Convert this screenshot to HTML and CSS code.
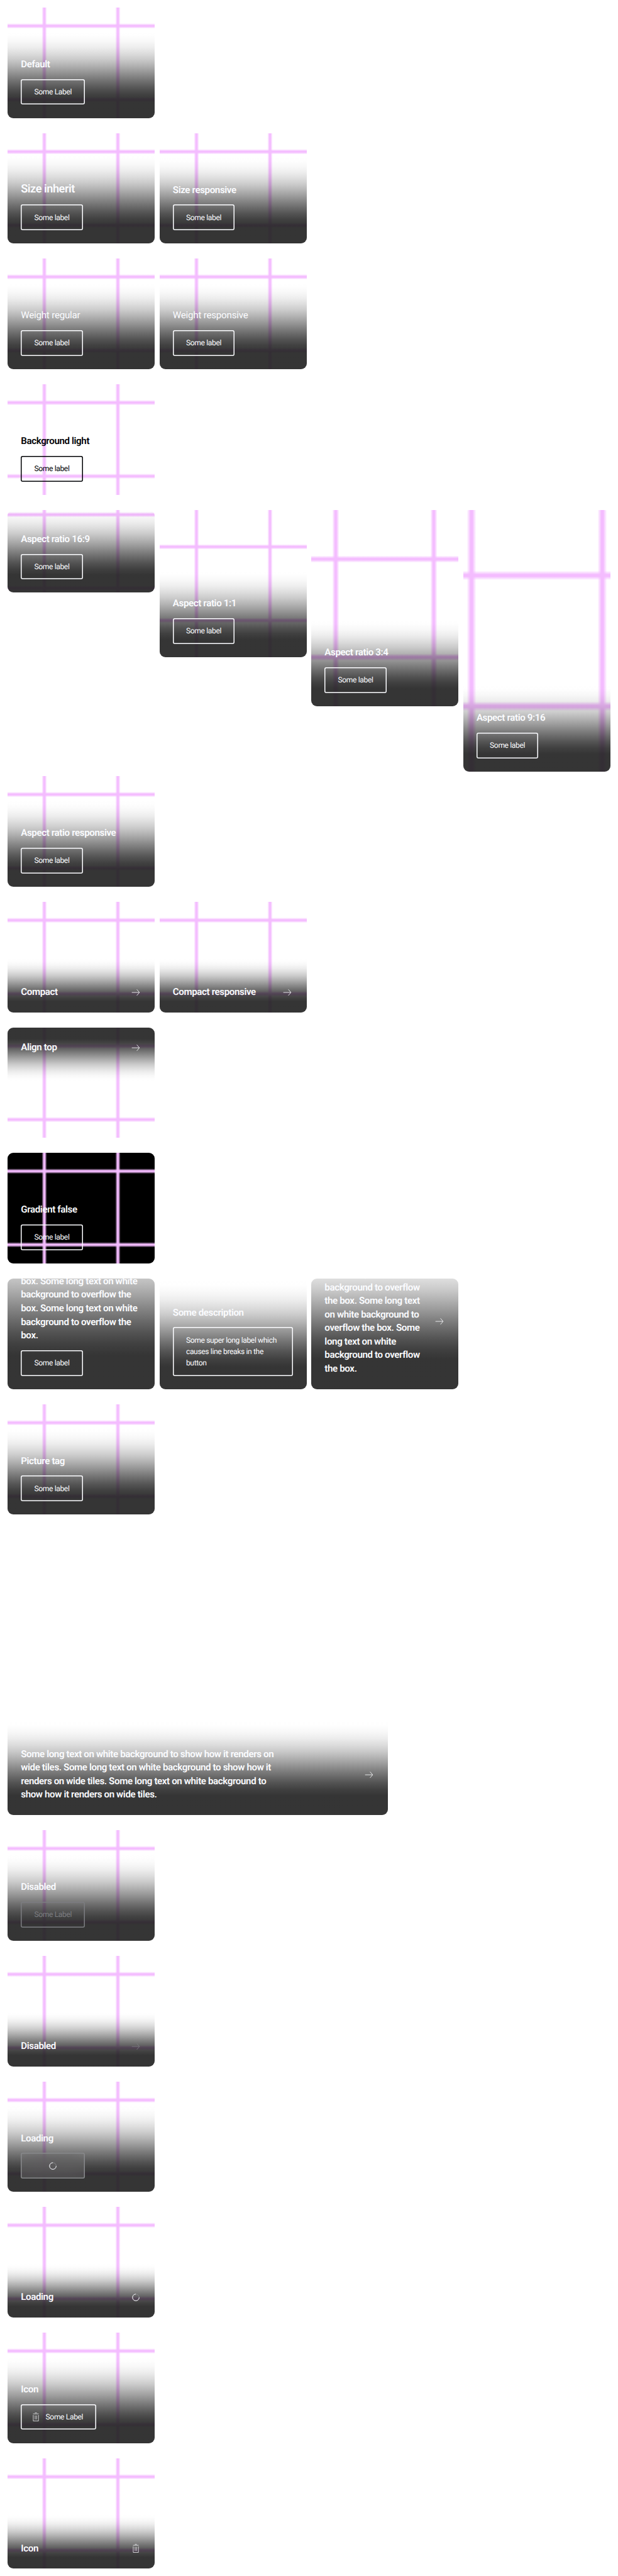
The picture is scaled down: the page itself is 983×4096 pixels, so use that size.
FILE: index.html
```html
<!DOCTYPE html>
<html lang="en">
<head>
<meta charset="utf-8">
<title>Link tile</title>
<link rel="stylesheet" href="styles.css">
</head>
<body>
<svg class="sprite" aria-hidden="true">
  <defs>
    <linearGradient id="lx" x1="0" x2="1" y1="0" y2="0">
      <stop offset="0" stop-color="#f4bcff" stop-opacity="0"/><stop offset=".4" stop-color="#f4bcff"/><stop offset=".6" stop-color="#f4bcff"/><stop offset="1" stop-color="#f4bcff" stop-opacity="0"/>
    </linearGradient>
    <linearGradient id="ly" x1="0" x2="0" y1="0" y2="1">
      <stop offset="0" stop-color="#f4bcff" stop-opacity="0"/><stop offset=".4" stop-color="#f4bcff"/><stop offset=".6" stop-color="#f4bcff"/><stop offset="1" stop-color="#f4bcff" stop-opacity="0"/>
    </linearGradient>
    <g id="grid">
      <rect x="23.2" y="0" width="3.6" height="100" fill="url(#lx)"/>
      <rect x="73.2" y="0" width="3.6" height="100" fill="url(#lx)"/>
      <rect x="0" y="23.2" width="100" height="3.6" fill="url(#ly)"/>
      <rect x="0" y="73.2" width="100" height="3.6" fill="url(#ly)"/>
    </g>
    <g id="arrow" fill="none" stroke="currentColor" stroke-width="1.1"><path d="M3.5 12H19.4M14 5.6L19.6 12L14 18.4"/></g>
    <g id="trash" fill="none" stroke="currentColor" stroke-width="1"><path d="M10 3.5h4M6 5.5h12M6.5 8v12.5h11V8M10.5 9v8.5M13.5 9v8.5"/></g>
    <g id="spinner" fill="none" stroke-width="1.2"><circle cx="12" cy="12" r="7" stroke="#88898c"/><path d="M19 12A7 7 0 1 1 12 5" stroke="#fbfcff"/></g>
  </defs>
</svg>
<main class="page">
  <section class="row">
    <a class="tile"><svg class="pic" viewBox="0 0 100 100" preserveAspectRatio="xMidYMid slice"><use href="#grid"/></svg><div class="content"><p class="title">Default</p><span class="btn">Some Label</span></div></a>
  </section>
  <section class="row">
    <a class="tile"><svg class="pic" viewBox="0 0 100 100" preserveAspectRatio="xMidYMid slice"><use href="#grid"/></svg><div class="content"><p class="title large">Size inherit</p><span class="btn">Some label</span></div></a>
    <a class="tile"><svg class="pic" viewBox="0 0 100 100" preserveAspectRatio="xMidYMid slice"><use href="#grid"/></svg><div class="content"><p class="title">Size responsive</p><span class="btn">Some label</span></div></a>
  </section>
  <section class="row">
    <a class="tile"><svg class="pic" viewBox="0 0 100 100" preserveAspectRatio="xMidYMid slice"><use href="#grid"/></svg><div class="content"><p class="title regular">Weight regular</p><span class="btn">Some label</span></div></a>
    <a class="tile"><svg class="pic" viewBox="0 0 100 100" preserveAspectRatio="xMidYMid slice"><use href="#grid"/></svg><div class="content"><p class="title regular">Weight responsive</p><span class="btn">Some label</span></div></a>
  </section>
  <section class="row">
    <a class="tile light"><svg class="pic" viewBox="0 0 100 100" preserveAspectRatio="xMidYMid slice"><use href="#grid"/></svg><div class="content plain"><p class="title">Background light</p><span class="btn">Some label</span></div></a>
  </section>
  <section class="row ratios">
    <a class="tile r16x9"><svg class="pic" viewBox="0 0 100 100" preserveAspectRatio="xMidYMid slice"><use href="#grid"/></svg><div class="content"><p class="title">Aspect ratio 16:9</p><span class="btn">Some label</span></div></a>
    <a class="tile r1x1"><svg class="pic" viewBox="0 0 100 100" preserveAspectRatio="xMidYMid slice"><use href="#grid"/></svg><div class="content"><p class="title">Aspect ratio 1:1</p><span class="btn">Some label</span></div></a>
    <a class="tile r3x4"><svg class="pic" viewBox="0 0 100 100" preserveAspectRatio="xMidYMid slice"><use href="#grid"/></svg><div class="content"><p class="title">Aspect ratio 3:4</p><span class="btn">Some label</span></div></a>
    <a class="tile r9x16"><svg class="pic" viewBox="0 0 100 100" preserveAspectRatio="xMidYMid slice"><use href="#grid"/></svg><div class="content"><p class="title">Aspect ratio 9:16</p><span class="btn">Some label</span></div></a>
  </section>
  <section class="row">
    <a class="tile"><svg class="pic" viewBox="0 0 100 100" preserveAspectRatio="xMidYMid slice"><use href="#grid"/></svg><div class="content"><p class="title">Aspect ratio responsive</p><span class="btn">Some label</span></div></a>
  </section>
  <section class="row">
    <a class="tile"><svg class="pic" viewBox="0 0 100 100" preserveAspectRatio="xMidYMid slice"><use href="#grid"/></svg><div class="content compact"><p class="title">Compact</p><svg class="icon" viewBox="0 0 24 24"><use href="#arrow"/></svg></div></a>
    <a class="tile"><svg class="pic" viewBox="0 0 100 100" preserveAspectRatio="xMidYMid slice"><use href="#grid"/></svg><div class="content compact"><p class="title">Compact responsive</p><svg class="icon" viewBox="0 0 24 24"><use href="#arrow"/></svg></div></a>
  </section>
  <section class="row">
    <a class="tile top"><svg class="pic" viewBox="0 0 100 100" preserveAspectRatio="xMidYMid slice"><use href="#grid"/></svg><div class="content compact"><p class="title">Align top</p><svg class="icon" viewBox="0 0 24 24"><use href="#arrow"/></svg></div></a>
  </section>
  <section class="row">
    <a class="tile black"><svg class="pic" viewBox="0 0 100 100" preserveAspectRatio="xMidYMid slice"><use href="#grid"/></svg><div class="content plain"><p class="title">Gradient false</p><span class="btn">Some label</span></div></a>
  </section>
  <section class="row">
    <a class="tile"><div class="content"><p class="title">Some long text on white background to overflow the box. Some long text on white background to overflow the box. Some long text on white background to overflow the box.</p><span class="btn">Some label</span></div></a>
    <a class="tile"><div class="content"><p class="title">Some description</p><span class="btn">Some super long label which causes line breaks in the button</span></div></a>
    <a class="tile"><div class="content compact"><p class="title">Some long text on white background to overflow the box. Some long text on white background to overflow the box. Some long text on white background to overflow the box.</p><svg class="icon" viewBox="0 0 24 24"><use href="#arrow"/></svg></div></a>
  </section>
  <section class="row">
    <a class="tile"><svg class="pic" viewBox="0 0 100 100" preserveAspectRatio="xMidYMid slice"><use href="#grid"/></svg><div class="content"><p class="title">Picture tag</p><span class="btn">Some label</span></div></a>
  </section>
  <section class="row wide">
    <a class="tile"><div class="content compact"><p class="title">Some long text on white background to show how it renders on wide tiles. Some long text on white background to show how it renders on wide tiles. Some long text on white background to show how it renders on wide tiles.</p><svg class="icon" viewBox="0 0 24 24"><use href="#arrow"/></svg></div></a>
  </section>
  <section class="row">
    <a class="tile"><svg class="pic" viewBox="0 0 100 100" preserveAspectRatio="xMidYMid slice"><use href="#grid"/></svg><div class="content"><p class="title">Disabled</p><span class="btn disabled">Some Label</span></div></a>
  </section>
  <section class="row">
    <a class="tile"><svg class="pic" viewBox="0 0 100 100" preserveAspectRatio="xMidYMid slice"><use href="#grid"/></svg><div class="content compact"><p class="title">Disabled</p><svg class="icon muted" viewBox="0 0 24 24"><use href="#arrow"/></svg></div></a>
  </section>
  <section class="row">
    <a class="tile"><svg class="pic" viewBox="0 0 100 100" preserveAspectRatio="xMidYMid slice"><use href="#grid"/></svg><div class="content"><p class="title">Loading</p><span class="btn loading"><svg class="icon" viewBox="0 0 24 24"><use href="#spinner"/></svg></span></div></a>
  </section>
  <section class="row">
    <a class="tile"><svg class="pic" viewBox="0 0 100 100" preserveAspectRatio="xMidYMid slice"><use href="#grid"/></svg><div class="content compact"><p class="title">Loading</p><svg class="icon" viewBox="0 0 24 24"><use href="#spinner"/></svg></div></a>
  </section>
  <section class="row">
    <a class="tile"><svg class="pic" viewBox="0 0 100 100" preserveAspectRatio="xMidYMid slice"><use href="#grid"/></svg><div class="content"><p class="title">Icon</p><span class="btn with-icon"><svg class="icon" viewBox="0 0 24 24"><use href="#trash"/></svg>Some Label</span></div></a>
  </section>
  <section class="row">
    <a class="tile"><svg class="pic" viewBox="0 0 100 100" preserveAspectRatio="xMidYMid slice"><use href="#grid"/></svg><div class="content compact"><p class="title">Icon</p><svg class="icon" viewBox="0 0 24 24"><use href="#trash"/></svg></div></a>
  </section>
</main>
</body>
</html>
```
FILE: styles.css
```css
html {
  font-size: 12.0965px;
  background: #fff;
}

body {
  margin: 0;
  font-family: Roboto, "Liberation Sans", sans-serif;
  text-rendering: geometricPrecision;
}

.sprite {
  position: absolute;
  width: 0;
  height: 0;
}

.page {
  box-sizing: border-box;
  width: 81.25rem;
  padding: 1rem;
  display: flex;
  flex-direction: column;
  gap: 2rem;
}

.row {
  display: grid;
  grid-template-columns: repeat(4, 1fr);
  gap: 0.625rem;
  align-items: start;
}

.ratios {
  margin-bottom: -1.375rem;
}

.wide {
  grid-template-columns: 50rem;
}

.tile {
  position: relative;
  display: flex;
  flex-direction: column;
  justify-content: flex-end;
  min-width: 0;
  min-height: 0;
  aspect-ratio: 4 / 3;
  height: auto;
  overflow: hidden;
  border-radius: 0.75rem;
  color: #fbfcff;
  contain: size;
}

.r16x9 { aspect-ratio: 16 / 9; }
.r1x1 { aspect-ratio: 1; }
.r3x4 { aspect-ratio: 3 / 4; }
.r9x16 { aspect-ratio: 9 / 16; }

.light { color: #010205; }
.black { background: #000; }
.top { justify-content: flex-start; }

/* picture behind the tile's content */
.pic {
  position: absolute;
  inset: 0;
  width: 100%;
  height: 100%;
}

.content {
  --direction: to top;
  position: relative;
  flex: none;
  display: flex;
  flex-direction: column;
  align-items: flex-start;
  gap: 1rem;
  padding: 3.75rem 1.75rem 1.75rem;
  background: linear-gradient(var(--direction),
    rgba(31, 31, 31, 0.9) 0%,
    rgba(31, 31, 31, 0.9) 20%,
    rgba(31, 31, 31, 0.852) 26.67%,
    rgba(31, 31, 31, 0.768) 33.33%,
    rgba(31, 31, 31, 0.668) 40%,
    rgba(31, 31, 31, 0.557) 46.67%,
    rgba(31, 31, 31, 0.442) 53.33%,
    rgba(31, 31, 31, 0.333) 60%,
    rgba(31, 31, 31, 0.232) 66.67%,
    rgba(31, 31, 31, 0.148) 73.33%,
    rgba(31, 31, 31, 0.079) 80%,
    rgba(31, 31, 31, 0.03) 86.67%,
    rgba(31, 31, 31, 0.004) 93.33%,
    rgba(31, 31, 31, 0) 100%);
}

.plain { background: none; }

.compact {
  flex-direction: row;
  align-items: center;
  justify-content: space-between;
  gap: 1.5rem;
}

.top .content {
  --direction: to bottom;
  padding: 1.75rem 1.75rem 3.75rem;
}

.title {
  margin: 0;
  max-width: 34.375rem;
  font-size: 1.25rem;
  font-weight: 600;
  line-height: 1.425;
  letter-spacing: -0.025em;
}

.large {
  font-size: 1.5rem;
  line-height: 1.4;
}

.regular {
  font-weight: 400;
  letter-spacing: -0.014em;
}

/* the outline is an inset shadow so that its width can be fractional */
.btn {
  --outline: currentColor;
  display: flex;
  align-items: center;
  gap: 0.5rem;
  box-sizing: border-box;
  padding: 0.9375rem 1.75rem;
  box-shadow: inset 0 0 0 0.125rem var(--outline);
  border-radius: 0.25rem;
  font-size: 1rem;
  line-height: 1.5rem;
  letter-spacing: -0.03em;
}

.disabled { color: #7c7d81; }

.with-icon { padding-left: 1.25rem; }

.loading {
  --outline: #88898c;
  width: 8.4rem;
  justify-content: center;
  background: rgba(148, 149, 152, 0.22);
  backdrop-filter: blur(1.2rem);
}

.icon {
  flex: none;
  display: block;
  width: 1.5rem;
  height: 1.5rem;
}

.muted { color: #7c7d81; }
```
